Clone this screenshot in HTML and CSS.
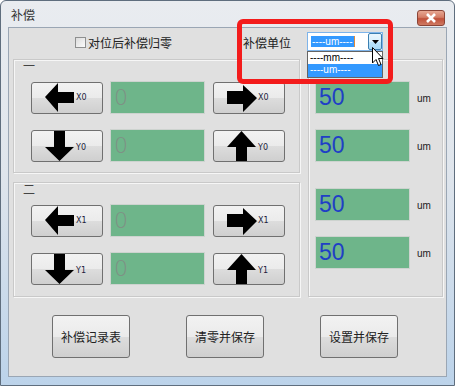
FILE: index.html
```html
<!DOCTYPE html>
<html>
<head>
    <title>补偿</title>
    <link rel="stylesheet" href="styles.css">
</head>
<body>
<div class="window">
    <div class="titlebar">
        <span class="title">补偿</span>
        <span class="close">
            <svg width="12" height="10" viewBox="0 0 12 10"><path d="M2 1 L10 9 M10 1 L2 9" stroke="#fff" stroke-width="2.6"/></svg>
        </span>
    </div>

    <div class="client">
        <div class="toprow">
            <label class="check"><span class="box"></span>对位后补偿归零</label>
            <span class="unit-label">补偿单位</span>
            <div class="combo">
                <span class="combo-text"><span class="sel">----um----</span><span class="caret"></span></span>
                <span class="combo-btn">
                    <svg width="7" height="4" viewBox="0 0 7 4"><path d="M0 0 L7 0 L3.5 4 Z" fill="#000"/></svg>
                </span>
                <ul class="dropdown">
                    <li>----mm----</li>
                    <li class="hi">----um----</li>
                </ul>
            </div>
        </div>

        <div class="groups">
            <div class="left-col">
                <div class="group g1">
                    <div class="group-title">一</div>
                    <div class="row">
                        <button class="jog">
                            <svg width="30" height="30" viewBox="0 0 30 30"><path d="M0 14 L13 0 L13 9 L29 9 L29 20 L13 20 L13 29 Z"/></svg>
                            <span class="axis">X0</span>
                        </button>
                        <div class="field"><span class="zero">0</span></div>
                        <button class="jog">
                            <svg width="30" height="30" viewBox="0 0 30 30"><path d="M0 8 L16 8 L16 2 L30 15 L16 29 L16 21 L0 21 Z"/></svg>
                            <span class="axis">X0</span>
                        </button>
                    </div>
                    <div class="row">
                        <button class="jog">
                            <svg width="30" height="30" viewBox="0 0 30 30"><path d="M9 0 L20 0 L20 16 L29 16 L14.5 30 L0 16 L9 16 Z"/></svg>
                            <span class="axis low">Y0</span>
                        </button>
                        <div class="field"><span class="zero">0</span></div>
                        <button class="jog">
                            <svg width="30" height="30" viewBox="0 0 30 30"><path d="M14.5 0 L29 16 L20 16 L20 30 L9 30 L9 16 L0 16 Z"/></svg>
                            <span class="axis low">Y0</span>
                        </button>
                    </div>
                </div>

                <div class="group g2">
                    <div class="group-title">二</div>
                    <div class="row">
                        <button class="jog">
                            <svg width="30" height="30" viewBox="0 0 30 30"><path d="M0 14 L13 0 L13 9 L29 9 L29 20 L13 20 L13 29 Z"/></svg>
                            <span class="axis">X1</span>
                        </button>
                        <div class="field"><span class="zero">0</span></div>
                        <button class="jog">
                            <svg width="30" height="30" viewBox="0 0 30 30"><path d="M0 8 L16 8 L16 2 L30 15 L16 29 L16 21 L0 21 Z"/></svg>
                            <span class="axis">X1</span>
                        </button>
                    </div>
                    <div class="row">
                        <button class="jog">
                            <svg width="30" height="30" viewBox="0 0 30 30"><path d="M9 0 L20 0 L20 16 L29 16 L14.5 30 L0 16 L9 16 Z"/></svg>
                            <span class="axis low">Y1</span>
                        </button>
                        <div class="field"><span class="zero">0</span></div>
                        <button class="jog">
                            <svg width="30" height="30" viewBox="0 0 30 30"><path d="M14.5 0 L29 16 L20 16 L20 30 L9 30 L9 16 L0 16 Z"/></svg>
                            <span class="axis low">Y1</span>
                        </button>
                    </div>
                </div>
            </div>

            <div class="group g-right">
                <div class="row"><div class="field"><span class="val">50</span></div><span class="unit">um</span></div>
                <div class="row"><div class="field"><span class="val">50</span></div><span class="unit">um</span></div>
                <div class="row far"><div class="field"><span class="val">50</span></div><span class="unit">um</span></div>
                <div class="row"><div class="field"><span class="val">50</span></div><span class="unit">um</span></div>
            </div>
        </div>

        <div class="actions">
            <button class="action">补偿记录表</button>
            <button class="action">清零并保存</button>
            <button class="action">设置并保存</button>
        </div>
    </div>

    <!-- red annotation box and mouse pointer drawn over the window -->
    <div class="mark"></div>
    <svg class="cursor" width="12" height="20" viewBox="0 0 12 20">
        <path d="M0.5 0.5 L0.5 16 L4 12.5 L6.5 18.5 L9 17.5 L6.5 11.5 L11 11.5 Z" fill="#fff" stroke="#000" stroke-width="1"/>
    </svg>
</div>
</body>
</html>
```

FILE: styles.css
```css
html, body {
    margin: 0;
    padding: 0;
    background: #ffffff;
}

body {
    width: 455px;
    height: 386px;
    font-family: "Noto Sans CJK SC", "Liberation Sans", sans-serif;
    font-size: 12px;
    color: #222;
}

/* Window frame */
.window {
    position: relative;
    box-sizing: border-box;
    width: 455px;
    height: 386px;
    border: 1px solid #5f6e7e;
    border-radius: 6px 6px 0 0;
    background: linear-gradient(to bottom, #e9ecf0 0, #dfe5ec 45%, #bcd3ea 100%);
    display: flex;
    flex-direction: column;
}

.titlebar {
    height: 26px;
    display: flex;
    align-items: center;
    justify-content: space-between;
    padding: 0 9px 0 10px;
}

.title {
    font-size: 12px;
    color: #333;
    margin-top: 1px;
}

.close {
    width: 28px;
    height: 16px;
    box-sizing: border-box;
    border: 1px solid #8b4436;
    border-radius: 3px;
    background: linear-gradient(to bottom, #e7a792 0, #d47d66 45%, #c0513a 55%, #cf7a62 100%);
    display: flex;
    align-items: center;
    justify-content: center;
    margin-top: 7px;
}

.client {
    margin: 0 7px 8px 7px;
    flex: 1;
    background: #e0e0e0;
    border: 1px solid #9aa6b4;
    display: flex;
    flex-direction: column;
}

/* Top row */
.toprow {
    height: 31px;
    display: flex;
    align-items: flex-start;
}

.check {
    display: flex;
    align-items: center;
    margin-left: 66px;
    margin-top: 6px;
    width: 168px;
    height: 17px;
    gap: 2px;
    color: #222;
}

.box {
    width: 11px;
    height: 11px;
    box-sizing: border-box;
    border: 1px solid #8e8f8f;
    background: linear-gradient(to bottom right, #dcdcdc, #fbfbfb);
}

.unit-label {
    width: 64px;
    margin-top: 6px;
    line-height: 17px;
}

.combo {
    position: relative;
    width: 76px;
    height: 19px;
    margin-top: 4px;
    box-sizing: border-box;
    border: 1px solid #7eb4ea;
    background: #fff;
    display: flex;
}

.combo-text {
    flex: 1;
    display: flex;
    align-items: center;
    padding-left: 3px;
}

.sel {
    background: #3399ff;
    color: #fff;
    font-family: "Liberation Sans", sans-serif;
    font-size: 10px;
    line-height: 11px;
    padding: 0 1px;
}

.caret {
    width: 1px;
    height: 11px;
    background: #e08a3a;
}

.combo-btn {
    width: 14px;
    box-sizing: border-box;
    border: 1px solid #3c7fb1;
    border-radius: 2px;
    background: linear-gradient(to bottom, #eaf6fd 0, #d9f0fc 50%, #bee6fd 50%, #a7d9f5 100%);
    display: flex;
    align-items: center;
    justify-content: center;
}

.dropdown {
    position: absolute;
    left: -1px;
    top: 18px;
    width: 76px;
    box-sizing: border-box;
    margin: 0;
    padding: 0;
    list-style: none;
    background: #fff;
    border: 1px solid #646464;
    font-family: "Liberation Sans", sans-serif;
    font-size: 10px;
}

.dropdown li {
    height: 12px;
    line-height: 12px;
    padding-left: 2px;
    color: #000;
}

.dropdown li.hi {
    height: 13px;
    background: #3399ff;
    color: #fff;
}

/* Group boxes */
.groups {
    display: flex;
    gap: 8px;
    margin-left: 4px;
}

.left-col {
    width: 287px;
    display: flex;
    flex-direction: column;
    gap: 9px;
}

.group {
    box-sizing: border-box;
    border: 1px solid #c9c9c9;
    box-shadow: inset 1px 1px 0 #f6f6f6, 1px 1px 0 #f6f6f6;
}

.g1 {
    height: 114px;
}

.g2 {
    height: 115px;
}

.group-title {
    height: 21px;
    line-height: 12px;
    padding-left: 9px;
    color: #444;
}

.row {
    display: flex;
    align-items: center;
    height: 33px;
    padding-left: 17px;
    gap: 7px;
    margin-bottom: 15px;
}

.row .field + .jog {
    margin-left: 1px;
}

.jog {
    width: 72px;
    height: 32px;
    box-sizing: border-box;
    padding: 0 0 0 13px;
    border: 1px solid #707070;
    border-radius: 3px;
    background: linear-gradient(to bottom, #f2f2f2 0, #ebebeb 50%, #dddddd 50%, #cfcfcf 100%);
    display: flex;
    align-items: center;
}

.jog svg {
    fill: #000;
    flex: none;
}

.axis {
    font-family: "DejaVu Sans", sans-serif;
    font-size: 8px;
    color: #1c1c3c;
    margin-left: 1px;
}

.axis.low {
    margin-top: 4px;
}

.field {
    width: 95px;
    height: 33px;
    box-sizing: border-box;
    background: #6eb58a;
    border: 1px solid #cdd3cf;
    display: flex;
    align-items: center;
    padding-left: 3px;
    font-family: "Liberation Sans", sans-serif;
    font-size: 23px;
}

.zero {
    color: #7e9085;
    font-family: "DejaVu Sans", sans-serif;
    font-weight: 300;
    font-size: 22px;
}

.val {
    color: #1f3fc6;
}

.g-right {
    width: 135px;
    height: 238px;
    padding-top: 21px;
}

.g-right .row {
    padding-left: 6px;
    gap: 7px;
}

.g-right .row.far {
    margin-top: 26px;
}

.unit {
    font-family: "Liberation Sans", sans-serif;
    font-size: 10px;
    color: #222;
    margin-top: 2px;
}

/* Bottom buttons */
.actions {
    display: flex;
    gap: 56px;
    margin: 18px 0 0 43px;
}

.action {
    width: 78px;
    height: 43px;
    border: 1px solid #707070;
    border-radius: 3px;
    background: linear-gradient(to bottom, #f2f2f2 0, #ebebeb 50%, #dddddd 50%, #cfcfcf 100%);
    font-family: "Noto Sans CJK SC", sans-serif;
    font-size: 12px;
    color: #222;
    padding: 0;
}

/* Overlays */
.mark {
    position: absolute;
    left: 236px;
    top: 18px;
    width: 156px;
    height: 65px;
    box-sizing: border-box;
    border: 5px solid #f31c1c;
    border-radius: 6px;
}

.cursor {
    position: absolute;
    left: 371px;
    top: 46px;
}
```
